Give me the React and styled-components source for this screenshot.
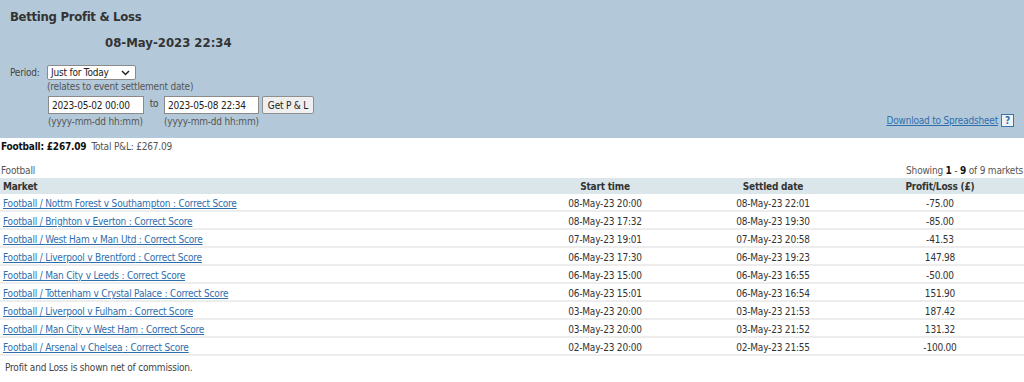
import React from 'react';
import styled, { createGlobalStyle } from 'styled-components';

const GlobalStyle = createGlobalStyle`
  body {
    margin: 0;
    background: #ffffff;
    font-family: Tahoma, "DejaVu Sans Condensed", "Liberation Sans", sans-serif;
    font-size: 10px;
    letter-spacing: -0.2px;
    line-height: 13px;
    color: #333333;
  }
`;

const rows = [
  ['Nottm Forest v Southampton', '08-May-23 20:00', '08-May-23 22:01', '-75.00'],
  ['Brighton v Everton', '08-May-23 17:32', '08-May-23 19:30', '-85.00'],
  ['West Ham v Man Utd', '07-May-23 19:01', '07-May-23 20:58', '-41.53'],
  ['Liverpool v Brentford', '06-May-23 17:30', '06-May-23 19:23', '147.98'],
  ['Man City v Leeds', '06-May-23 15:00', '06-May-23 16:55', '-50.00'],
  ['Tottenham v Crystal Palace', '06-May-23 15:01', '06-May-23 16:54', '151.90'],
  ['Liverpool v Fulham', '03-May-23 20:00', '03-May-23 21:53', '187.42'],
  ['Man City v West Ham', '03-May-23 20:00', '03-May-23 21:52', '131.32'],
  ['Arsenal v Chelsea', '02-May-23 20:00', '02-May-23 21:55', '-100.00'],
];

/* ----------------- Header panel ----------------- */

const Panel = styled.div`
  background: #b3c9d9;
  padding: 9px 10px 10px 10px;
  display: flex;
  flex-direction: column;
`;

const Title = styled.h1`
  margin: 0;
  font-size: 13px;
  line-height: 16px;
  letter-spacing: -0.3px;
  font-weight: bold;
  color: #333;
`;

const DateLine = styled.div`
  margin: 10px 0 0 95px;
  font-size: 13px;
  line-height: 16px;
  letter-spacing: 0;
  font-weight: bold;
  color: #333;
`;

const BottomRow = styled.div`
  display: flex;
  justify-content: space-between;
  align-items: flex-end;
  margin-top: 14px;
`;

const FormGrid = styled.div`
  display: grid;
  grid-template-columns: 37px auto;
  align-items: start;
`;

const Label = styled.span`
  color: #444;
  padding-top: 1px;
`;

const Stack = styled.div`
  display: flex;
  flex-direction: column;
`;

const Select = styled.div`
  box-sizing: border-box;
  width: 89px;
  height: 15px;
  background: #fff;
  border: 1px solid #8a8a8a;
  border-radius: 2px;
  display: flex;
  align-items: center;
  justify-content: space-between;
  padding: 0 5px 0 3px;
  color: #222;
`;

const Hint = styled.span`
  color: #555;
  white-space: nowrap;
  margin-top: ${(p) => p.$top || 0}px;
`;

const DateRow = styled.div`
  display: flex;
  align-items: flex-start;
  margin-top: 3px;
  margin-left: 1px;
`;

const Field = styled.div`
  display: flex;
  flex-direction: column;
  width: ${(p) => p.$w}px;
`;

const Input = styled.div`
  box-sizing: border-box;
  height: 18px;
  background: #fff;
  border: 1px solid #8a8a8a;
  display: flex;
  align-items: center;
  padding-left: 3px;
  color: #222;
`;

const To = styled.span`
  width: 20px;
  text-align: center;
  color: #444;
  padding-top: 1px;
`;

const Button = styled.button`
  box-sizing: border-box;
  margin-left: 3px;
  width: 52px;
  height: 18px;
  padding: 0;
  background: #efefef;
  border: 1px solid #8f8f8f;
  border-radius: 2px;
  font: inherit;
  letter-spacing: inherit;
  color: #222;
`;

const Download = styled.div`
  display: flex;
  align-items: center;
  gap: 3px;
  margin-bottom: 1px;
`;

const Link = styled.a`
  color: #2f6ead;
  text-decoration: underline;
`;

const HelpBox = styled.span`
  box-sizing: border-box;
  display: inline-flex;
  align-items: center;
  justify-content: center;
  width: 13px;
  height: 13px;
  border: 1px solid #3a72ab;
  background: #eef3f7;
  color: #2f6ead;
  font-weight: bold;
  font-size: 10px;
`;

/* ----------------- Summary + table ----------------- */

const Summary = styled.div`
  padding: 2px 1px 0 1px;
  display: flex;
  gap: 5px;
  color: #555;
`;

const Strong = styled.b`
  color: #111;
`;

const TableCaption = styled.div`
  display: flex;
  justify-content: space-between;
  margin-top: 11px;
  padding: 0 1px;
  color: #555;
`;

const Table = styled.table`
  width: 100%;
  border-collapse: collapse;
  margin-top: 1px;
`;

const Th = styled.th`
  background: #dae6ea;
  padding: 2px 3px 1px;
  text-align: ${(p) => p.$align || 'center'};
  font-weight: bold;
  color: #333;
  width: ${(p) => p.$w || 'auto'};
`;

const Td = styled.td`
  padding: 3px 3px 0;
  text-align: ${(p) => p.$align || 'center'};
  border-bottom: 2px solid #ededed;
  color: #333;
`;

const Footer = styled.div`
  padding: 5px 5px;
  color: #444;
`;

const Chevron = () => (
  <svg width="9" height="6" viewBox="0 0 9 6">
    <path d="M1 1 L4.5 4.5 L8 1" fill="none" stroke="#222" strokeWidth="1.5" />
  </svg>
);

export default function App() {
  return (
    <>
      <GlobalStyle />
      <Panel>
        <Title>Betting Profit &amp; Loss</Title>
        <DateLine>08-May-2023 22:34</DateLine>
        <BottomRow>
          <FormGrid>
            <Label>Period:</Label>
            <Stack>
              <Select>
                <span>Just for Today</span>
                <Chevron />
              </Select>
              <Hint $top={0}>(relates to event settlement date)</Hint>
              <DateRow>
                <Field $w={96}>
                  <Input>2023-05-02 00:00</Input>
                  <Hint $top={1}>(yyyy-mm-dd hh:mm)</Hint>
                </Field>
                <To>to</To>
                <Field $w={95}>
                  <Input>2023-05-08 22:34</Input>
                  <Hint $top={1}>(yyyy-mm-dd hh:mm)</Hint>
                </Field>
                <Button>Get P &amp; L</Button>
              </DateRow>
            </Stack>
          </FormGrid>
          <Download>
            <Link href="#">Download to Spreadsheet</Link>
            <HelpBox>?</HelpBox>
          </Download>
        </BottomRow>
      </Panel>
      <Summary>
        <Strong>Football: £267.09</Strong>
        <span>Total P&amp;L: £267.09</span>
      </Summary>
      <TableCaption>
        <span>Football</span>
        <span>
          Showing <Strong>1</Strong> - <Strong>9</Strong> of 9 markets
        </span>
      </TableCaption>
      <Table>
        <thead>
          <tr>
            <Th $align="left" $w="514px">Market</Th>
            <Th $w="164px">Start time</Th>
            <Th $w="160px">Settled date</Th>
            <Th>Profit/Loss (£)</Th>
          </tr>
        </thead>
        <tbody>
          {rows.map(([match, start, settled, pl]) => (
            <tr key={match}>
              <Td $align="left">
                <Link href="#">Football / {match} : Correct Score</Link>
              </Td>
              <Td>{start}</Td>
              <Td>{settled}</Td>
              <Td>{pl}</Td>
            </tr>
          ))}
        </tbody>
      </Table>
      <Footer>Profit and Loss is shown net of commission.</Footer>
    </>
  );
}
